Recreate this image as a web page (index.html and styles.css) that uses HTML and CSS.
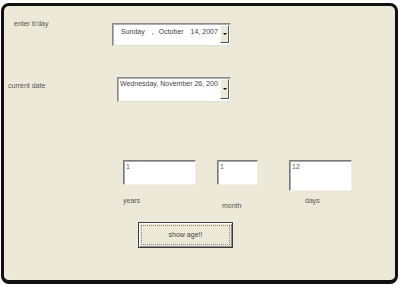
FILE: index.html
```html
<!DOCTYPE html>
<html>
<head>
<meta charset="utf-8">
<link rel="stylesheet" href="styles.css">
</head>
<body>
<div class="frame">
  <div class="row row1">
    <div class="label l-bday">enter b'day</div>
    <div class="picker picker1">
      <div class="ptext p1text"><span>Sunday</span><span class="c1">,</span><span class="c2">October</span><span class="c3">14, 2007</span></div>
      <div class="drop"><span class="tri"></span></div>
    </div>
  </div>
  <div class="row row2">
    <div class="label l-cur">current date</div>
    <div class="picker picker2">
      <div class="ptext p2text">Wednesday, November 26, 200</div>
      <div class="drop"><span class="tri"></span></div>
    </div>
  </div>
  <div class="row row3">
    <div class="tb tb-years">1</div>
    <div class="tb tb-month">1</div>
    <div class="tb tb-days">12</div>
  </div>
  <div class="row row4">
    <div class="label lb-years">years</div>
    <div class="label lb-month">month</div>
    <div class="label lb-days">days</div>
  </div>
  <div class="row row5">
    <button class="btn"><span class="focus">show age!!</span></button>
  </div>
</div>
</body>
</html>
```
FILE: styles.css
```css
html, body {
  margin: 0;
  padding: 0;
  background: #ffffff;
}
.frame {
  margin: 3px 2px 2px 1px;
  height: 274px;
  border: 3px solid #111;
  border-bottom-width: 4px;
  border-radius: 8px;
  background: #ece9d8;
  overflow: hidden;
}
.row {
  display: flex;
  align-items: flex-start;
}
.label {
  font: 7px/10px "Liberation Sans", Arial, sans-serif;
  color: #555;
  white-space: nowrap;
  box-sizing: border-box;
}
.row1 { margin-top: 13px; }
.l-bday { width: 108px; padding-left: 10px; }
.picker {
  display: flex;
  box-sizing: border-box;
  background: #fff;
  border: 1px solid;
  border-color: #8a8a8a #e4e1d4 #e4e1d4 #8a8a8a;
  box-shadow: inset 1px 1px #b0b0b0;
}
.picker1 { margin-top: 4px; width: 119px; height: 23px; }
.ptext {
  flex: 1;
  min-width: 0;
  white-space: nowrap;
  font: 7px/9px "Liberation Sans", Arial, sans-serif;
  color: #444;
}
.p1text { padding: 3px 0 0 8px; }
.c1 { margin-left: 7px; }
.c2 { margin-left: 5px; }
.c3 { margin-left: 7px; }
.p2text { padding: 1px 0 0 2px; }
.drop {
  width: 9px;
  flex: none;
  margin: 1px 1px 2px 0;
  box-sizing: border-box;
  background: #ece9d8;
  border: 1px solid;
  border-color: #fff #555 #555 #fff;
  display: flex;
  align-items: center;
  justify-content: center;
}
.tri {
  width: 0;
  height: 0;
  border-left: 2px solid transparent;
  border-right: 2px solid transparent;
  border-top: 2px solid #000;
}
.row2 { margin-top: 31px; }
.l-cur { width: 113px; padding-left: 4px; margin-top: 4px; }
.picker2 { width: 114px; height: 25px; }
.row3 { margin-top: 58px; }
.tb {
  box-sizing: border-box;
  background: #fff;
  border: 1px solid;
  border-color: #7a7a7a #f2f0e8 #f2f0e8 #7a7a7a;
  box-shadow: inset 1px 1px #a8a8a8;
  font: 7px/9px "Liberation Sans", Arial, sans-serif;
  color: #666;
  padding: 1px 0 0 2px;
}
.tb-years { margin-left: 119px; width: 73px; height: 25px; }
.tb-month { margin-left: 21px; width: 41px; height: 25px; }
.tb-days { margin-left: 31px; width: 63px; height: 31px; }
.row4 { margin-top: 5px; }
.lb-years { margin-left: 119px; width: 99px; }
.lb-month { width: 83px; margin-top: 5px; }
.row5 { margin-top: 11px; }
.btn {
  margin: 0 0 0 134px;
  width: 95px;
  height: 26px;
  padding: 2px;
  box-sizing: border-box;
  background: #ece9d8;
  border: 1px solid #3c3c3c;
  box-shadow: inset 1px 1px #fff, inset -1px -1px #8a8a8a;
  display: flex;
  font: 7px/10px "Liberation Sans", Arial, sans-serif;
  color: #444;
}
.focus {
  flex: 1;
  border: 1px dotted #888;
  display: flex;
  align-items: center;
  justify-content: center;
}
```
